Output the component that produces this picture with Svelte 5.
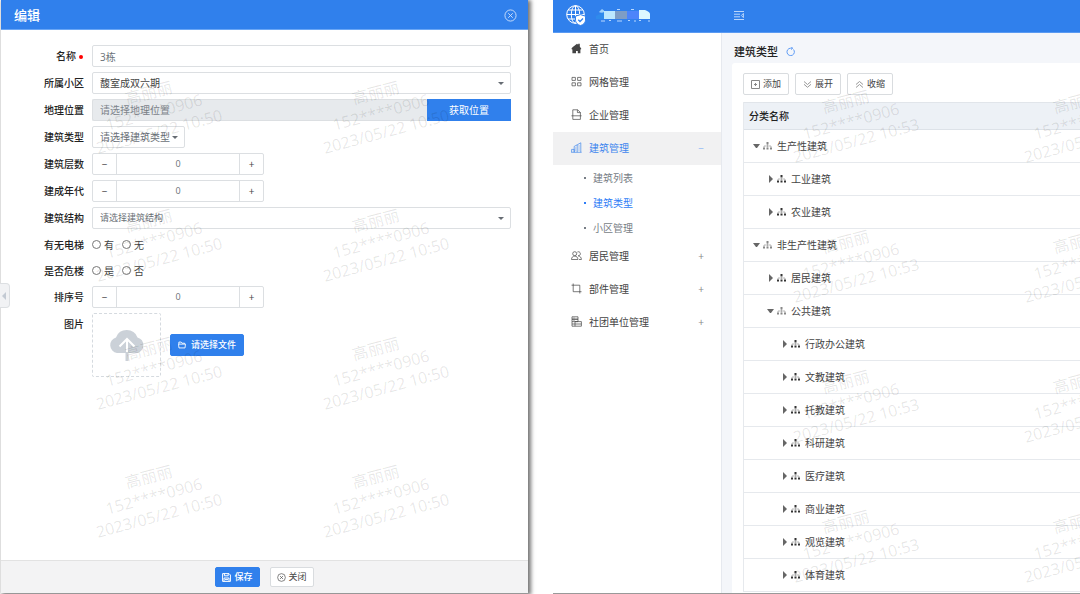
<script lang="ts">
    type MenuItem = { name: string; icon: string; mark?: string; children?: string[] };
    type TreeRow = { name: string; level: number; open: boolean };

    let name = $state('3栋');
    let place = $state('');
    let counts = $state({ floors: 0, year: 0, order: 0 });
    let lift = $state('');
    let danger = $state('');
    let currentPage = $state('建筑类型');

    const menu: MenuItem[] = [
        { name: '首页', icon: 'home' },
        { name: '网格管理', icon: 'grid' },
        { name: '企业管理', icon: 'file' },
        { name: '建筑管理', icon: 'building', mark: '−', children: ['建筑列表', '建筑类型', '小区管理'] },
        { name: '居民管理', icon: 'people', mark: '+' },
        { name: '部件管理', icon: 'crop', mark: '+' },
        { name: '社团单位管理', icon: 'group', mark: '+' }
    ];

    const rows: TreeRow[] = [
        { name: '生产性建筑', level: 0, open: true },
        { name: '工业建筑', level: 1, open: false },
        { name: '农业建筑', level: 1, open: false },
        { name: '非生产性建筑', level: 0, open: true },
        { name: '居民建筑', level: 1, open: false },
        { name: '公共建筑', level: 1, open: true },
        { name: '行政办公建筑', level: 2, open: false },
        { name: '文教建筑', level: 2, open: false },
        { name: '托教建筑', level: 2, open: false },
        { name: '科研建筑', level: 2, open: false },
        { name: '医疗建筑', level: 2, open: false },
        { name: '商业建筑', level: 2, open: false },
        { name: '观览建筑', level: 2, open: false },
        { name: '体育建筑', level: 2, open: false }
    ];

    function step(key: 'floors' | 'year' | 'order', by: number) {
        counts[key] = Math.max(0, counts[key] + by);
    }
</script>

{#snippet watermark(time: string, amount: number)}
    {#each Array(amount) as _}
        <div class="stamp">
            <div>高丽丽<br />152****0906<br />2023/05/22 {time}</div>
        </div>
    {/each}
{/snippet}

{#snippet stepper(key: 'floors' | 'year' | 'order', label: string)}
    <label for={key}>{label}</label>
    <div class="stepper">
        <button type="button" aria-label="减少" onclick={() => step(key, -1)}>−</button>
        <input id={key} type="number" bind:value={counts[key]} />
        <button type="button" aria-label="增加" onclick={() => step(key, 1)}>+</button>
    </div>
{/snippet}

{#snippet closeIcon(size: number)}
    <svg width={size} height={size} viewBox="0 0 14 14" fill="none" stroke="currentColor">
        <circle cx="7" cy="7" r="6" />
        <path d="M4.6 4.6l4.8 4.8M9.4 4.6l-4.8 4.8" />
    </svg>
{/snippet}

{#snippet menuIcon(icon: string)}
    <svg width="11" height="11" viewBox="0 0 11 11" fill="none" stroke="currentColor" stroke-width="0.7">
        {#if icon === 'home'}
            <path d="M0.3 6L1.5 4.200 6 0.800l1.200.9V.8h1.600V3.400l1.600 2.600-1 .5V10.200H6.800V8H5v2.200H1.400V6.500z" fill="#444" stroke="none" />
        {:else if icon === 'grid'}
            <path d="M1 1.4h3.4v3H1zM6.6 1.4H10v3H6.6zM1 6.8h3.4v3H1zM6.6 6.8H10v3H6.6z" />
        {:else if icon === 'file'}
            <path d="M1.800 6.800V0.800h4.800l2.800 2.600V6.800M6.400 0.800v2.800h3M0.400 6.800h10.200M1.800 6.800v3.600h7.600V6.800" />
        {:else if icon === 'building'}
            <path d="M0.6 10.2V7.4h2.6v2.8M3.2 10.2V4.4l3-1.6v7.4M6.2 2.8l3.6-2v9.4M0.2 10.3h10.4M7.4 4h1.2M7.4 6h1.2M7.4 8h1.2M4.2 6h1M4.2 8h1" />
        {:else if icon === 'people'}
            <path d="M3.7 1.7a2 2 0 1 1 0 4 2 2 0 0 1 0-4zM0.5 9.5c0-2 1.2-3.4 3.2-3.4s3.2 1.4 3.2 3.4zM6.4 2a2 2 0 1 1 .6 3.7M7.4 6.1c1.8 0 3 1.400 3 3.400H8" />
        {:else if icon === 'crop'}
            <path d="M0.5 2.2h8.3v8.3M2.2 0.5v8.2h8.3" />
        {:else}
            <path d="M1 0.800h6v2.400H1zM1 3.200h6v2.400H1zM1 5.600v4.600h3M1 8h3M4 5.600h6.400v4.600H4zM4 8h6.400M2.500 2h1M2.500 4.400h1" />
        {/if}
    </svg>
{/snippet}

<div class="page">
    <section class="window dialog">
        <header class="dialog-head">
            <h2>编辑</h2>
            <button type="button" class="close" aria-label="关闭窗口">{@render closeIcon(13)}</button>
        </header>

        <form id="edit-form" class="fields">
            <label for="name" class="required">名称</label>
            <input id="name" class="field" type="text" bind:value={name} />

            <label for="community">所属小区</label>
            <div class="select">
                <select id="community" class="field dark">
                    <option>馥室成双六期</option>
                </select>
                <i class="caret"></i>
            </div>

            <label for="place">地理位置</label>
            <div class="place">
                <input id="place" class="field" type="text" placeholder="请选择地理位置" readonly bind:value={place} />
                <button type="button">获取位置</button>
            </div>

            <label for="kind">建筑类型</label>
            <div class="select short">
                <select id="kind" class="field">
                    <option>请选择建筑类型</option>
                </select>
                <i class="caret"></i>
            </div>

            {@render stepper('floors', '建筑层数')}
            {@render stepper('year', '建成年代')}

            <label for="structure">建筑结构</label>
            <div class="select">
                <select id="structure" class="field small">
                    <option>请选择建筑结构</option>
                </select>
                <i class="caret"></i>
            </div>

            <span id="lift-label" class="label">有无电梯</span>
            <div class="radios" role="radiogroup" aria-labelledby="lift-label">
                {#each ['有', '无'] as option}
                    <label><input type="radio" name="lift" value={option} bind:group={lift} />{option}</label>
                {/each}
            </div>

            <span id="danger-label" class="label">是否危楼</span>
            <div class="radios" role="radiogroup" aria-labelledby="danger-label">
                {#each ['是', '否'] as option}
                    <label><input type="radio" name="danger" value={option} bind:group={danger} />{option}</label>
                {/each}
            </div>

            {@render stepper('order', '排序号')}

            <span class="label picture-label">图片</span>
            <div class="upload">
                <div class="preview">
                    <svg width="36" height="32" viewBox="0 0 36 32">
                        <path d="M8 24a8 8 0 0 1-1-15.600A11.500 11.500 0 0 1 28.500 8.500 8 8 0 0 1 28 24z" fill="#cbd1d8" />
                        <path d="M18 24V11M10.500 17.500L18 10l7.500 7.500" fill="none" stroke="#fff" stroke-width="2" />
                        <path d="M18 23v9" stroke="#cbd1d8" stroke-width="3" />
                    </svg>
                </div>
                <button type="button" class="btn primary">
                    <svg width="8" height="8" viewBox="0 0 9 9" fill="none" stroke="currentColor">
                        <path d="M1 3.500V1.200h2.500l1 1.300h3v1M0.600 3.500h7.800l-.5 4.300H1.100z" />
                    </svg>
                    <span class="pick">请选择文件</span>
                </button>
            </div>
        </form>

        <footer class="dialog-foot">
            <button type="submit" form="edit-form" class="btn primary">
                <svg width="9" height="9" viewBox="0 0 9 9" fill="none" stroke="currentColor">
                    <path d="M0.600 0.600h6.400l1.400 1.400v6.400H0.600zM2.400 0.600v2.200h3.800V0.600M2 8.400V5h5v3.400M3 6.600h3" />
                </svg>
                保存
            </button>
            <button type="button" class="btn">{@render closeIcon(9)} 关闭</button>
        </footer>

        <button type="button" class="handle" aria-label="收起"><i></i></button>
        <div class="marks left" aria-hidden="true">{@render watermark('10:50', 8)}</div>
    </section>

    <section class="window admin">
        <header class="top">
            <div class="brand">
                <svg width="20" height="21" viewBox="0 0 20 21" fill="none" stroke="#fff">
                    <circle cx="9.500" cy="9.500" r="8.800" />
                    <ellipse cx="9.500" cy="9.500" rx="4.200" ry="8.800" />
                    <path d="M9.500 0.700v17.600M0.700 9.500h17.600M2.200 5h14.600M2.200 14h14.600" />
                    <path d="M14.500 9.600l5 1.600v4c0 2.600-2 4.400-5 5.400-3-1-5-2.800-5-5.400v-4z" fill="#fff" stroke="#3080ec" />
                    <path d="M12.300 14.800l1.700 1.700 3-3" stroke="#3080ec" stroke-width="1.300" />
                </svg>
                <svg width="58" height="14" viewBox="0 0 58 14">
                    <path d="M4 4l3-3 2 1.500V5L5 4.500z" fill="#9fd2fb" />
                    <path d="M1 8l8-4v7H1z" fill="#2f8bec" />
                    <path d="M9 3h11v8H9z" fill="#bce8ff" />
                    <path d="M20 3h12v8H20z" fill="#7e9dc5" />
                    <path d="M32 3h12v8H32z" fill="#4d84fa" />
                    <path d="M44 2h6q5 2 5 4v5H44z" fill="#dcf8ff" />
                    <path d="M6 13h4M14 12.500h2M22 13h5M33 12.500h2M39 13h2M44 12.500h2M53 13h2M22 1.500h3M36 1.500h3" stroke="#b9d8ff" />
                </svg>
            </div>
            <button type="button" class="fold" aria-label="折叠菜单">
                <svg width="10" height="9" viewBox="0 0 10 9" fill="none" stroke="#b9d5fb">
                    <path d="M0 0.500h10M0 3.200h6M0 5.800h6M0 8.500h10M9.400 2.400L7.400 4.500l2 2.100z" />
                </svg>
            </button>
        </header>

        <div class="body">
            <nav>
                {#each menu as item}
                    <a href="#{item.name}" class="item" class:active={item.children}>
                        {@render menuIcon(item.icon)}
                        <span>{item.name}</span>
                        {#if item.mark}<b>{item.mark}</b>{/if}
                    </a>
                    {#if item.children}
                        {#each item.children as child}
                            <a
                                href="#{child}"
                                class="child"
                                class:current={child === currentPage}
                                onclick={() => (currentPage = child)}
                            >
                                <i></i>{child}
                            </a>
                        {/each}
                    {/if}
                {/each}
            </nav>

            <main>
                <div class="title">
                    <h1>建筑类型</h1>
                    <button type="button" aria-label="刷新">
                        <svg width="9" height="9" viewBox="0 0 9 9" fill="none" stroke="#5f9cf5">
                            <path d="M7.500 2.500A3.700 3.700 0 1 1 4.500 1.200H6.500M5.200 0l1.500 1.200-1.500 1.400" />
                        </svg>
                    </button>
                </div>

                <div class="card">
                    <div class="tools">
                        <button type="button" class="btn">
                            <svg width="9" height="9" viewBox="0 0 9 9" fill="none" stroke="#888">
                                <path d="M0.500 0.500h8v8h-8zM4.500 3v3M3 4.500h3" />
                            </svg>
                            添加
                        </button>
                        <button type="button" class="btn">
                            <svg width="9" height="9" viewBox="0 0 9 9" fill="none" stroke="#999">
                                <path d="M1 1.500l3.500 3 3.500-3M1 4.300l3.500 3 3.500-3" />
                            </svg>
                            展开
                        </button>
                        <button type="button" class="btn">
                            <svg width="9" height="9" viewBox="0 0 9 9" fill="none" stroke="#999">
                                <path d="M1 4.500l3.500-3 3.500 3M1 7.500l3.500-3 3.500 3" />
                            </svg>
                            收缩
                        </button>
                    </div>

                    <table>
                        <thead>
                            <tr><th>分类名称</th></tr>
                        </thead>
                        <tbody>
                            {#each rows as row}
                                <tr>
                                    <td>
                                        <div class="node level-{row.level}">
                                            <i class="arrow" class:open={row.open}></i>
                                            <svg width="9" height="8" viewBox="0 0 9 8" fill={row.open ? '#888' : '#333'}>
                                                <path d="M3.500 0h2v2.500h-2zM0 5.500h2v2H0zM3.500 5.500h2v2h-2zM7 5.500h2v2H7z" />
                                                <path d="M4.500 2v3.500M1 5.500V4h7v1.500" fill="none" stroke="#999" stroke-width="0.700" />
                                            </svg>
                                            <span>{row.name}</span>
                                        </div>
                                    </td>
                                </tr>
                            {/each}
                        </tbody>
                    </table>
                </div>
            </main>
        </div>
        <div class="marks right" aria-hidden="true">{@render watermark('10:53', 8)}</div>
    </section>
</div>

<style>
    :global(body) {
        background: #fff;
    }

    .page {
        display: grid;
        grid-template-columns: 1fr 1fr;
        gap: 25px;
        min-height: 100vh;
        padding: 0 0 1px 1px;
        box-sizing: border-box;
        overflow: hidden;
        font-family: "Open Sans", "Noto Sans CJK SC", sans-serif;
        font-size: 10px;
        line-height: 14px;
        color: #444;
    }

    .page * {
        box-sizing: border-box;
    }

    button,
    input,
    select {
        margin: 0;
        font: inherit;
        color: inherit;
    }

    button {
        padding: 0;
        border: 0;
        background: none;
        cursor: pointer;
    }

    svg {
        flex: none;
    }

    .window {
        position: relative;
        display: flex;
        flex-direction: column;
        min-width: 0;
        background: #fff;
    }

    .dialog {
        box-shadow: 2px 1px 4px 1px #777;
    }

    .dialog-head {
        display: flex;
        align-items: center;
        justify-content: space-between;
        height: 30px;
        padding: 0 11px 0 13px;
        border-bottom: 1px solid #6aa6f5;
        background: #3080ec;
        color: #fff;
    }

    h2 {
        margin: 0;
        font-size: 13px;
        font-weight: 500;
    }

    .close {
        display: flex;
        padding-top: 2px;
        color: #cfe1fb;
    }

    .fields {
        display: grid;
        flex: 1;
        grid-template-columns: 83px 1fr;
        align-content: start;
        align-items: center;
        gap: 5px 8px;
        padding: 15px 17px 15px 0;
    }

    .fields > label,
    .label {
        text-align: right;
        font-weight: 500;
        color: #222;
    }

    .required::after {
        content: "";
        display: inline-block;
        width: 4px;
        height: 4px;
        margin: 0 1px 1px 3px;
        border-radius: 50%;
        background: #f00;
    }

    .field {
        width: 100%;
        height: 22px;
        padding: 0 8px 0 7px;
        border: 1px solid #dcdfe2;
        border-radius: 2px;
        outline: 0;
        background: #fff;
        color: #6b7178;
    }

    .field.dark {
        color: #444;
    }

    .field.small {
        font-size: 9px;
    }

    .field::placeholder {
        color: #7d848b;
        opacity: 1;
    }

    .select {
        display: grid;
        align-items: center;
    }

    .select.short {
        width: 93px;
    }

    .select > * {
        grid-area: 1 / 1;
    }

    select {
        appearance: none;
    }

    .caret {
        justify-self: end;
        margin-right: 7px;
        border: 3px solid transparent;
        border-top-color: #666c73;
        border-bottom: 0;
        pointer-events: none;
    }

    .place {
        display: flex;
    }

    .place .field {
        flex: 1;
        min-width: 0;
        border-right: 0;
        background: #e7eaed;
    }

    .place button {
        width: 84px;
        background: #3080ec;
        color: #fff;
    }

    .stepper {
        display: flex;
        width: 172px;
        height: 22px;
        border: 1px solid #dcdfe2;
        border-radius: 2px;
    }

    .stepper button {
        width: 23px;
    }

    .stepper input {
        flex: 1;
        min-width: 0;
        padding: 0;
        border: solid #dcdfe2;
        border-width: 0 1px;
        outline: 0;
        color: #6b7178;
        font-size: 9px;
        text-align: center;
        appearance: textfield;
    }

    .stepper input::-webkit-inner-spin-button {
        appearance: none;
    }

    .radios {
        display: flex;
        align-items: center;
        gap: 8px;
        height: 21px;
    }

    .radios label {
        display: flex;
        align-items: center;
        gap: 3px;
    }

    .radios input {
        appearance: none;
        width: 9px;
        height: 9px;
        border: 1px solid #777;
        border-radius: 50%;
    }

    .radios input:checked {
        border: 3px solid #3080ec;
    }

    .picture-label {
        align-self: start;
        padding-top: 4px;
    }

    .upload {
        display: flex;
        align-items: center;
        gap: 9px;
    }

    .preview {
        display: flex;
        align-items: center;
        justify-content: center;
        width: 69px;
        height: 64px;
        border: 1px dashed #d5dadf;
        border-radius: 2px;
    }

    .btn {
        display: flex;
        align-items: center;
        justify-content: center;
        gap: 3px;
        height: 22px;
        padding: 0 7px;
        border: 1px solid #d9dcdf;
        border-radius: 2px;
        background: #fff;
        font-size: 9px;
    }

    .btn.primary {
        border-color: #3080ec;
        background: #3080ec;
        color: #fff;
        font-weight: 500;
    }

    .pick {
        padding-left: 2px;
    }

    .dialog-foot {
        display: flex;
        align-items: center;
        justify-content: center;
        gap: 10px;
        height: 33px;
        border-top: 1px solid #e2e2e2;
        background: #f3f3f4;
    }

    .dialog-foot .btn {
        height: 20px;
        padding: 0 6px;
    }

    .handle {
        position: absolute;
        top: 283px;
        left: -1px;
        display: flex;
        align-items: center;
        width: 10px;
        height: 25px;
        padding-left: 2px;
        border: 1px solid #dcdfe2;
        border-left: 0;
        border-radius: 0 4px 4px 0;
        background: #f1f2f4;
    }

    .handle i {
        border: 4px solid transparent;
        border-right-color: #c3cad3;
        border-left: 0;
    }

    .marks {
        position: absolute;
        inset: 0;
        display: grid;
        overflow: hidden;
        pointer-events: none;
        font-size: 16px;
        line-height: 20px;
        text-align: center;
        white-space: nowrap;
        color: rgba(0, 0, 0, 0.1);
    }

    .marks.left {
        grid-template-columns: 227px 227px;
        grid-auto-rows: 128px;
        padding: 48px 0 0 39px;
    }

    .marks.right {
        grid-template-columns: 231px 231px;
        grid-auto-rows: 140px;
        padding: 51px 0 0 182px;
    }

    .stamp {
        display: flex;
        align-items: center;
        justify-content: center;
    }

    .stamp div {
        transform: rotate(-15deg);
    }

    .admin {
        box-shadow: 0 1px 0 #999;
    }

    .top {
        display: flex;
        align-items: center;
        height: 33px;
        border-bottom: 1px solid #5a9af2;
        background: #3080ec;
    }

    .brand {
        display: flex;
        align-items: center;
        gap: 9px;
        width: 181px;
        padding: 0 0 2px 13px;
    }

    .fold {
        display: flex;
        padding-bottom: 2px;
    }

    .body {
        display: flex;
        flex: 1;
    }

    nav {
        flex: none;
        width: 169px;
        border-right: 1px solid #e6e9ef;
    }

    a {
        color: inherit;
        text-decoration: none;
    }

    .item {
        display: flex;
        align-items: center;
        gap: 7px;
        height: 33px;
        padding: 0 17px 2px 18px;
    }

    .item.active {
        background: #f1f1f2;
        color: #3f86ee;
    }

    .item b {
        margin-left: auto;
        font-weight: 400;
        color: #888;
    }

    .item.active b {
        color: #8db7f5;
    }

    .child {
        display: flex;
        align-items: center;
        gap: 7px;
        height: 25px;
        padding-left: 31px;
        color: #777d85;
    }

    .child i {
        width: 2px;
        height: 2px;
        background: currentColor;
    }

    .child.current {
        color: #2f7df6;
    }

    main {
        flex: 1;
        min-width: 0;
        padding-left: 10px;
        background: #f4f6fa;
    }

    .title {
        display: flex;
        align-items: center;
        gap: 8px;
        height: 30px;
        padding: 7px 0 0 2px;
    }

    .title button {
        display: flex;
    }

    h1 {
        margin: 0;
        font-size: 11px;
        font-weight: 500;
        color: #222;
    }

    .card {
        padding: 10px 0 1px 11px;
        border-radius: 3px 0 0 0;
        background: #fff;
    }

    .tools {
        display: flex;
        gap: 6px;
        margin-bottom: 7px;
    }

    table {
        width: 100%;
        border-collapse: separate;
        border-spacing: 0;
        border-left: 1px solid #e6e9ed;
    }

    th {
        height: 28px;
        padding: 0 5px;
        border-top: 1px solid #e1e5ea;
        border-bottom: 1px solid #dde2e8;
        background: #edf1f6;
        text-align: left;
        font-weight: 500;
        color: #222;
    }

    td {
        height: 33px;
        padding: 0;
        border-bottom: 1px solid #e6e9ed;
    }

    .node {
        display: flex;
        align-items: center;
        gap: 3px;
        padding-left: 9px;
    }

    .node.level-1 {
        padding-left: 23px;
    }

    .node.level-2 {
        padding-left: 37px;
    }

    .node span {
        padding-left: 2px;
    }

    .arrow {
        width: 5px;
        height: 8px;
        margin-left: 2px;
        border: solid transparent;
        border-width: 4px 1px 4px 4px;
        border-left-color: #666;
    }

    .arrow.open {
        width: 7px;
        height: 4px;
        margin-left: 0;
        border-width: 4px 3px 0;
        border-color: #666 transparent transparent;
    }
</style>
